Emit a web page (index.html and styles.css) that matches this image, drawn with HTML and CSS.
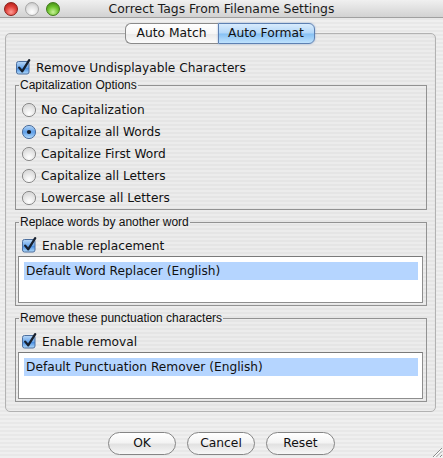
FILE: index.html
```html
<!DOCTYPE html>
<html>
<head>
<meta charset="utf-8">
<link rel="stylesheet" href="styles.css">
</head>
<body>
<div class="window">
  <div class="titlebar">
    <div class="lights">
      <span class="light red"></span>
      <span class="light grey"></span>
      <span class="light green"></span>
    </div>
    <div class="title">Correct Tags From Filename Settings</div>
    <div></div>
  </div>
  <div class="main">
    <div class="tabs">
      <div class="tab tab-left">Auto Match</div>
      <div class="tab tab-right active">Auto Format</div>
    </div>
    <div class="panel">
      <label class="check-row top-check">
        <svg class="checkbox" viewBox="0 0 16 16" width="16" height="16"><defs><linearGradient id="cb1" x1="0" y1="0" x2="0" y2="1"><stop offset="0" stop-color="#b9d8f7"/><stop offset="0.5" stop-color="#6aa6ea"/><stop offset="0.55" stop-color="#4a8fe2"/><stop offset="1" stop-color="#b4dcfb"/></linearGradient></defs><rect x="1.5" y="2.5" width="12.5" height="12.5" rx="2" fill="url(#cb1)" stroke="#4d6f9e"/><path d="M4.2 8.6 L7.2 12.4 L14.2 1.2" fill="none" stroke="#17202e" stroke-width="2.3" stroke-linecap="round" stroke-linejoin="round"/></svg>
        <span>Remove Undisplayable Characters</span>
      </label>

      <fieldset class="group group-cap">
        <legend>Capitalization Options</legend>
        <div class="radios">
          <div class="radio-row"><svg class="radio" viewBox="0 0 16 16" width="16" height="16"><defs><radialGradient id="rg" cx="0.5" cy="0.75" r="0.7"><stop offset="0" stop-color="#ffffff"/><stop offset="1" stop-color="#d6d6d6"/></radialGradient></defs><circle cx="8" cy="8" r="6.6" fill="url(#rg)" stroke="#8b8b8b"/></svg><span>No Capitalization</span></div>
          <div class="radio-row"><svg class="radio" viewBox="0 0 16 16" width="16" height="16"><defs><linearGradient id="rb" x1="0" y1="0" x2="0" y2="1"><stop offset="0" stop-color="#b6d6f6"/><stop offset="0.5" stop-color="#5f9fe8"/><stop offset="1" stop-color="#b8ddfb"/></linearGradient></defs><circle cx="8" cy="8" r="6.6" fill="url(#rb)" stroke="#4f6f9c"/><circle cx="8" cy="8" r="2.1" fill="#141a26"/></svg><span>Capitalize all Words</span></div>
          <div class="radio-row"><svg class="radio" viewBox="0 0 16 16" width="16" height="16"><circle cx="8" cy="8" r="6.6" fill="url(#rg)" stroke="#8b8b8b"/></svg><span>Capitalize First Word</span></div>
          <div class="radio-row"><svg class="radio" viewBox="0 0 16 16" width="16" height="16"><circle cx="8" cy="8" r="6.6" fill="url(#rg)" stroke="#8b8b8b"/></svg><span>Capitalize all Letters</span></div>
          <div class="radio-row"><svg class="radio" viewBox="0 0 16 16" width="16" height="16"><circle cx="8" cy="8" r="6.6" fill="url(#rg)" stroke="#8b8b8b"/></svg><span>Lowercase all Letters</span></div>
        </div>
      </fieldset>

      <fieldset class="group group-list">
        <legend>Replace words by another word</legend>
        <label class="check-row inner-check">
          <svg class="checkbox" viewBox="0 0 16 16" width="16" height="16"><rect x="1.5" y="2.5" width="12.5" height="12.5" rx="2" fill="url(#cb1)" stroke="#4d6f9e"/><path d="M4.2 8.6 L7.2 12.4 L14.2 1.2" fill="none" stroke="#17202e" stroke-width="2.3" stroke-linecap="round" stroke-linejoin="round"/></svg>
          <span>Enable replacement</span>
        </label>
        <div class="listbox">
          <div class="list-item selected">Default Word Replacer (English)</div>
        </div>
      </fieldset>

      <fieldset class="group group-list group-last">
        <legend>Remove these punctuation characters</legend>
        <label class="check-row inner-check">
          <svg class="checkbox" viewBox="0 0 16 16" width="16" height="16"><rect x="1.5" y="2.5" width="12.5" height="12.5" rx="2" fill="url(#cb1)" stroke="#4d6f9e"/><path d="M4.2 8.6 L7.2 12.4 L14.2 1.2" fill="none" stroke="#17202e" stroke-width="2.3" stroke-linecap="round" stroke-linejoin="round"/></svg>
          <span>Enable removal</span>
        </label>
        <div class="listbox">
          <div class="list-item selected">Default Punctuation Remover (English)</div>
        </div>
      </fieldset>
    </div>

    <div class="buttons">
      <button class="btn">OK</button>
      <button class="btn">Cancel</button>
      <button class="btn btn-wide">Reset</button>
    </div>
  </div>
  <svg class="grip" viewBox="0 0 12 12" width="12" height="12"><path d="M11 2 L2 11 M11 5.5 L5.5 11 M11 9 L9 11" stroke="#8a8a8a" stroke-width="1"/><path d="M11 3 L3 11 M11 6.5 L6.5 11 M11 10 L10 11" stroke="#ffffff" stroke-width="1"/></svg>
</div>
</body>
</html>
```

FILE: styles.css
```css
* { box-sizing: border-box; }

html, body {
  margin: 0;
  padding: 0;
}

body {
  width: 443px;
  height: 458px;
  overflow: hidden;
  font-family: "DejaVu Sans", "Liberation Sans", sans-serif;
  font-size: 12.2px;
  color: #111;
}

.window {
  position: relative;
  width: 443px;
  height: 458px;
  background: repeating-linear-gradient(to bottom, #efefef 0, #efefef 2px, #e8e8e8 2px, #e8e8e8 4px);
}

.titlebar {
  height: 18px;
  display: grid;
  grid-template-columns: 1fr auto 1fr;
  align-items: center;
  background: linear-gradient(to bottom, #f0f0f0, #dedede 60%, #d2d2d2);
  border-bottom: 1px solid #a0a0a0;
}

.lights {
  display: flex;
  gap: 7px;
  padding-left: 4px;
  align-items: center;
}

.light {
  width: 14px;
  height: 14px;
  border-radius: 50%;
  display: block;
}

.red {
  background: radial-gradient(circle at 50% 75%, #ff9c94 0, #e0413a 50%, #a8150f 100%);
  border: 1px solid #8a1f1a;
}

.grey {
  background: radial-gradient(circle at 50% 75%, #ffffff 0, #e2e2e2 55%, #bdbdbd 100%);
  border: 1px solid #a6a6a6;
}

.green {
  background: radial-gradient(circle at 50% 75%, #c9f29a 0, #6cc22c 50%, #3a7d10 100%);
  border: 1px solid #3f7a18;
}

.title {
  font-size: 12.4px;
  color: #1a1a1a;
  text-align: center;
  line-height: 17px;
}

.main {
  display: flex;
  flex-direction: column;
  padding: 5px 7px 0 5px;
}

.tabs {
  display: flex;
  justify-content: center;
  position: relative;
  z-index: 2;
  height: 21px;
  padding-right: 2px;
}

.tab {
  height: 21px;
  line-height: 19px;
  font-size: 12.3px;
  text-align: center;
  border: 1px solid #8a8a8a;
}

.tab-left {
  width: 93px;
  border-right: none;
  border-radius: 6px 0 0 6px;
  background: linear-gradient(to bottom, #ffffff, #f6f6f6 50%, #e9e9e9 52%, #fbfbfb);
}

.tab-right {
  width: 97px;
  border-radius: 0 6px 6px 0;
  border-color: #5d80b2;
  background: linear-gradient(to bottom, #d9ecfd, #b1d6f8 48%, #86c0f3 52%, #bfe2fd);
  box-shadow: 0 0 2px rgba(80, 130, 200, 0.6);
}

.panel {
  margin-top: -11px;
  border: 1px solid #b2b2b2;
  border-radius: 5px;
  padding: 25px 8px 9px 9px;
  display: flex;
  flex-direction: column;
  background: repeating-linear-gradient(to bottom, #ececec 0, #ececec 2px, #e5e5e5 2px, #e5e5e5 4px);
  box-shadow: inset 0 1px 2px rgba(0, 0, 0, 0.06);
}

.check-row {
  display: flex;
  align-items: center;
  gap: 5px;
}

.top-check {
  height: 18px;
}

.checkbox {
  display: block;
  flex: none;
  margin-top: -2px;
}

.group {
  margin: 0;
  border: 1px solid #929292;
  padding: 0 3px 0 2px;
  min-width: 0;
}

.group legend {
  font-family: "Liberation Sans", Arial, sans-serif;
  font-size: 12px;
  line-height: 14px;
  padding: 0 1px;
  margin-left: 1px;
  color: #111;
}

.group-cap {
  margin-top: 1px;
}

.radios {
  padding: 7px 0 0 4px;
  display: flex;
  flex-direction: column;
}

.radio-row {
  height: 22px;
  display: flex;
  align-items: center;
  gap: 4px;
}

.radio {
  display: block;
  flex: none;
  margin-left: -1px;
}

.group-list {
  margin-top: 5px;
  padding-bottom: 2px;
}

.group-last {
  margin-top: 5px;
}

.inner-check {
  height: 20px;
  margin-top: 7px;
  padding-left: 3px;
}

.listbox {
  height: 47px;
  background: #ffffff;
  border: 1px solid #8e8e8e;
  border-top-color: #7a7a7a;
  padding: 5px 4px 0 5px;
}

.list-item {
  height: 18px;
  line-height: 18px;
  padding-left: 2px;
  white-space: nowrap;
}

.selected {
  background: #b5d5ff;
}

.buttons {
  display: flex;
  justify-content: center;
  gap: 11px;
  margin-top: 20px;
  padding-left: 2px;
}

.btn {
  width: 68px;
  height: 23px;
  font-family: "DejaVu Sans", sans-serif;
  font-size: 12.3px;
  color: #111;
  border: 1px solid #858585;
  border-radius: 12px;
  background: linear-gradient(to bottom, #ffffff, #f4f4f4 45%, #e2e2e2 55%, #f7f7f7);
  padding: 0;
  line-height: 21px;
}

.btn-wide {
  width: 69px;
}

.grip {
  position: absolute;
  right: 0;
  bottom: 0;
  display: block;
}
```
